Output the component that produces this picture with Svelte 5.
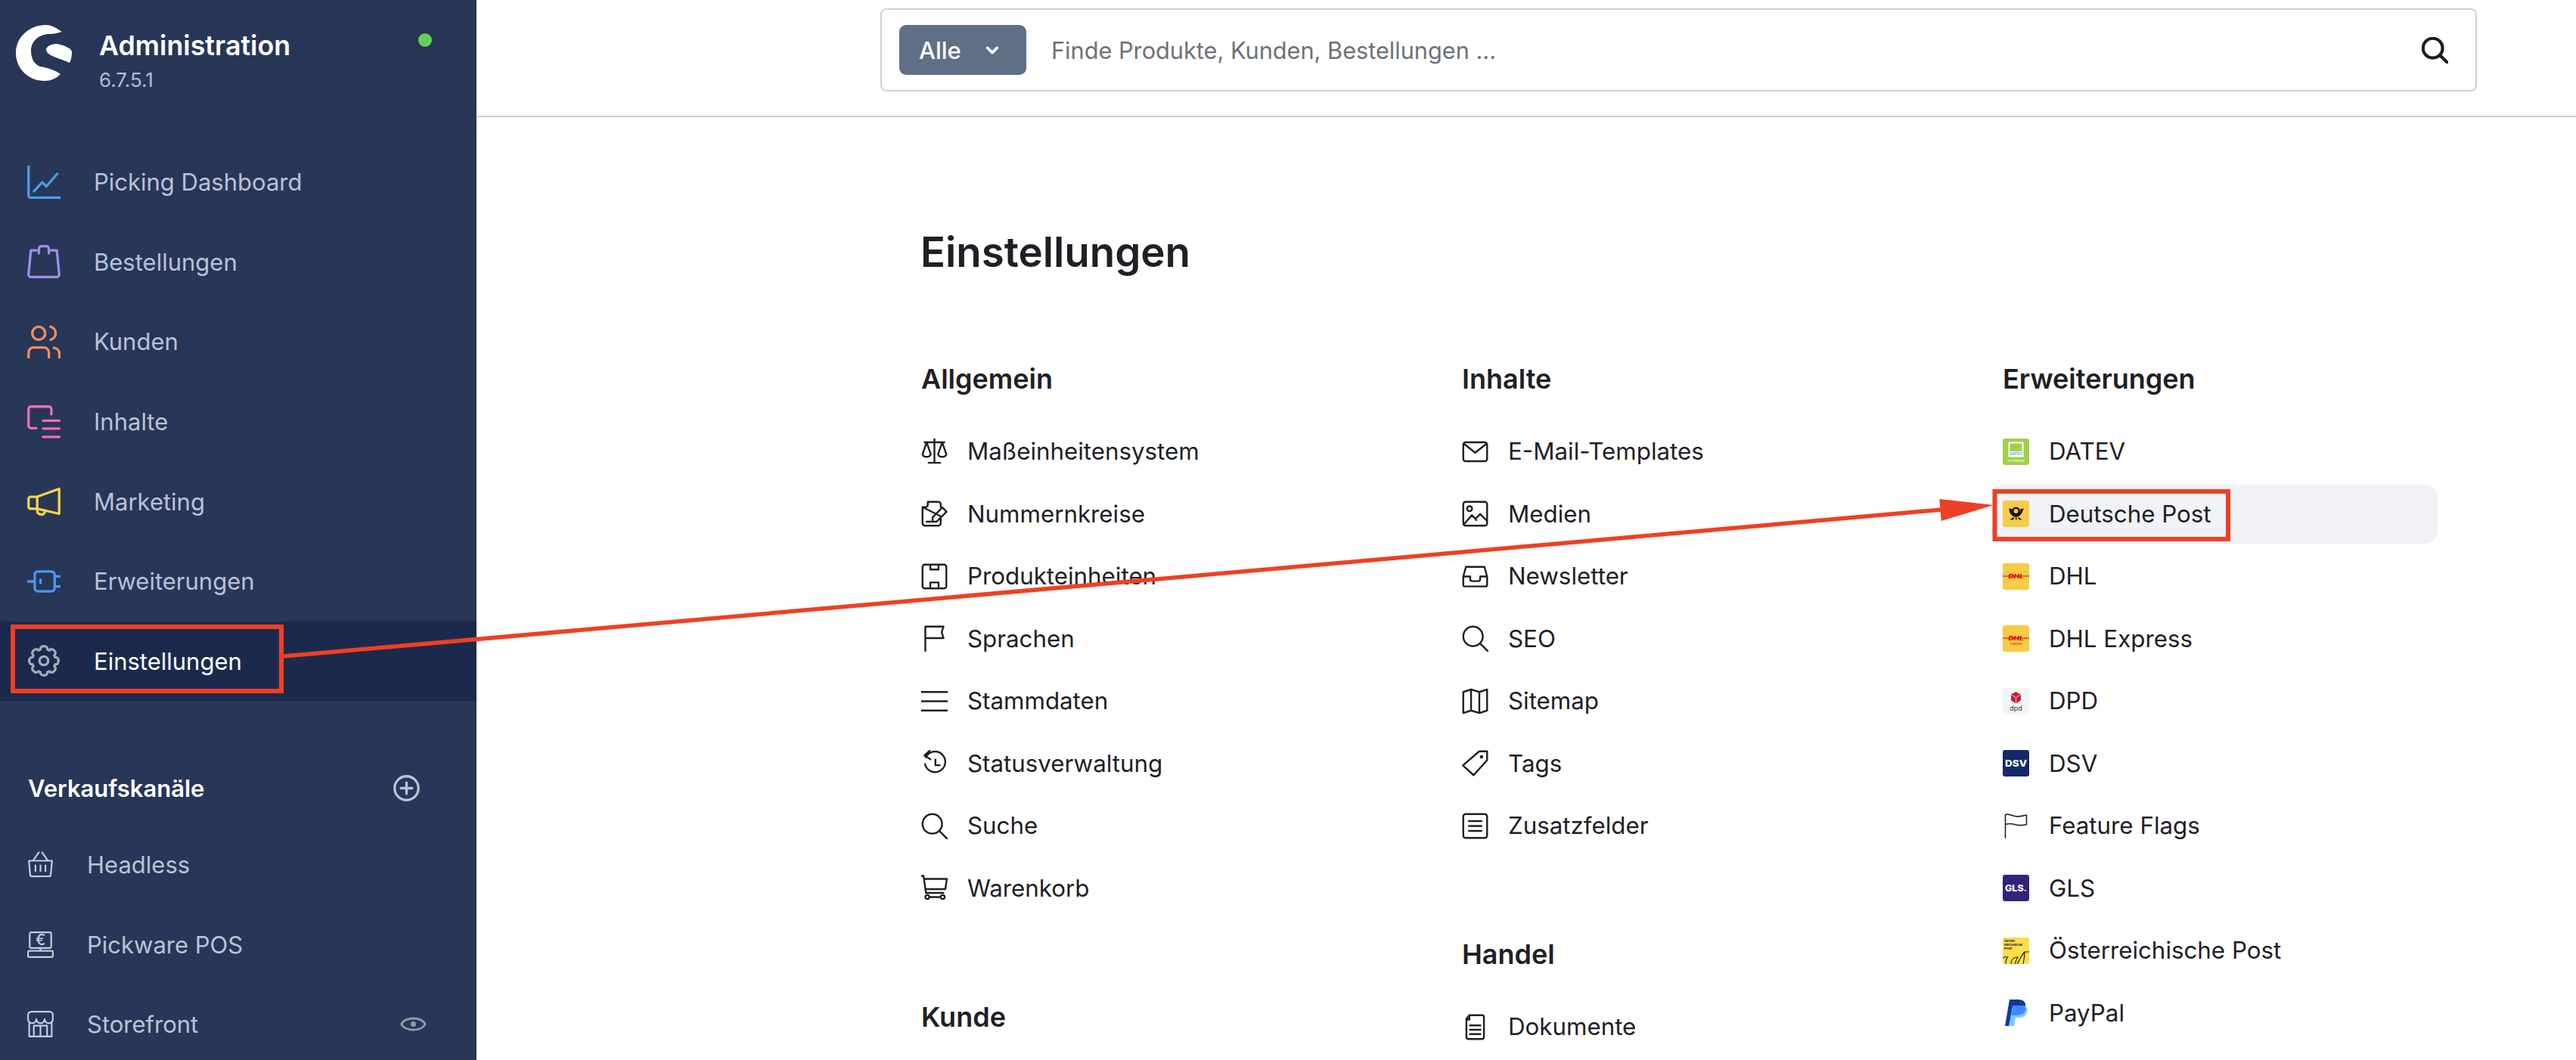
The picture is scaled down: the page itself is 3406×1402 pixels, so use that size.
<script>
  const gear = (() => {
    let d = '';
    for (let i = 0; i < 8; i++) {
      const a = (i * Math.PI) / 4 - Math.PI / 2;
      const p = (r, o) => `${(10 + r * Math.cos(a + o)).toFixed(2)} ${(10 + r * Math.sin(a + o)).toFixed(2)}`;
      d += `${i ? 'L' : 'M'}${p(7.1, -0.3)}C${p(9.8, -0.26)} ${p(9.8, 0.26)} ${p(7.1, 0.3)}`;
    }
    return d + 'Z';
  })();

  const nav = [
    { label: 'Picking Dashboard', color: '#4a9fe6', d: 'M.8 0V18a1.3 1.3 0 0 0 1.3 1.3H20M4 15.5L9 10L11.5 12.5L18 5' },
    { label: 'Bestellungen', color: '#9e8fe8', d: 'M5.5 3.2H2.2L.8 17.5a1.5 1.5 0 0 0 1.5 1.8H17.7a1.5 1.5 0 0 0 1.5-1.8L17.8 3.2H14.5M7 5V2.3a1.6 1.6 0 0 1 1.6-1.6h2.8A1.6 1.6 0 0 1 13 2.3V5' },
    { label: 'Kunden', color: '#ee8e5f', d: 'M6.9 1A3.9 3.9 0 1 0 6.9 8.8A3.9 3.9 0 1 0 6.9 1ZM14 1A4 4 0 0 1 14 8.8M.8 19.5V16.5A3 3 0 0 1 3.8 13.5H10A3 3 0 0 1 13 16.5V19.5M16 13.7A3.4 3.4 0 0 1 19.3 17V19.5' },
    { label: 'Inhalte', color: '#ec6fb0', d: 'M5.5 13.8H2.3A1.5 1.5 0 0 1 .8 12.3V2.3A1.5 1.5 0 0 1 2.3.8H13A1.5 1.5 0 0 1 14.5 2.3V5.5M9.5 9.3H19.3M9.5 14H19.3M9.5 19H19.3' },
    { label: 'Marketing', color: '#f6d545', d: 'M19.2 2.5L6 7.3V14.5L19.2 17.5ZM6 7.3H2.1A1.3 1.3 0 0 0 .8 8.6V13.2A1.3 1.3 0 0 0 2.1 14.5H6M6 14.8V15.5a2.4 2.4 0 0 0 4.6 1' },
    { label: 'Erweiterungen', color: '#4a97f5', d: 'M6.5 4H14.5A2 2 0 0 1 16.5 6V14A2 2 0 0 1 14.5 16H6.5A2 2 0 0 1 4.5 14V6A2 2 0 0 1 6.5 4ZM.3 10H4.5M16.5 7H20M16.5 13H20M8 9V11' },
    { label: 'Einstellungen', color: '#a3abb8', d: gear + 'M10 7.4A2.6 2.6 0 1 0 10 12.6A2.6 2.6 0 1 0 10 7.4Z', active: true }
  ];

  const channels = [
    { label: 'Headless', d: 'M1 5.7H15L14.2 14.2a1 1 0 0 1-1 .9H2.8a1 1 0 0 1-1-.9ZM3.5 5.7L7 .6M12.5 5.7L9 .6M5 8.5V12M8 8.5V12M11 8.5V12' },
    { label: 'Pickware POS', euro: true, d: 'M2.5.5H13.5a1 1 0 0 1 1 1V9a1 1 0 0 1-1 1H2.5a1 1 0 0 1-1-1V1.5a1 1 0 0 1 1-1ZM8 10V11.7M1.2 11.7H14.8a.7.7 0 0 1 .7.7V14.8a.7.7 0 0 1-.7.7H1.2a.7.7 0 0 1-.7-.7V12.4a.7.7 0 0 1 .7-.7Z' },
    { label: 'Storefront', eye: true, d: 'M.5 5V2.5a2 2 0 0 1 2-2H13.5a2 2 0 0 1 2 2V5a2.5 2.5 0 0 1-5 0a2.5 2.5 0 0 1-5 0a2.5 2.5 0 0 1-5 0ZM1.2 7V15.5H14.8V7M4 15.5V9H12V15.5M8 9V15.5' }
  ];

  const box = 'M2.2.8H13.8A1.4 1.4 0 0 1 15.2 2.2V13.8A1.4 1.4 0 0 1 13.8 15.2H2.2A1.4 1.4 0 0 1 .8 13.8V2.2A1.4 1.4 0 0 1 2.2.8Z';
  const search = 'M6.7.8A5.9 5.9 0 1 0 6.7 12.6A5.9 5.9 0 1 0 6.7.8ZM11 11L15.6 15.6';

  const col1 = [
    { title: 'Allgemein', items: [
      ['Maßeinheitensystem', 'M8 0V14.5M4.5 14.7H11.5M2 2.3H14M3.3 2.3L.8 9.5a2.6 2.2 0 0 0 5 0ZM12.7 2.3L10.2 9.5a2.6 2.2 0 0 0 5 0Z'],
      ['Nummernkreise', 'M4 .8H10.3a1.5 1.5 0 0 1 1.5 1.5V4M11.8 9.5V13.7a1.5 1.5 0 0 1-1.5 1.5H2.3a1.5 1.5 0 0 1-1.5-1.5V4ZM.8 4H2.5A1.5 1.5 0 0 0 4 2.5V.8M12.8 4.2L15.3 6.8L9.3 12.8H6.9V10.2ZM3.3 12.8H6'],
      ['Produkteinheiten', box + 'M5.5.8V3.8H10.5V.8M5.5 15.2V11.6H10.5V15.2'],
      ['Sprachen', 'M2.5 15.6V.8H13.5L12.4 4.2L13.5 7.8H2.5'],
      ['Stammdaten', 'M0 2.4H16M0 8H16M0 13.6H16'],
      ['Statusverwaltung', 'M2.8 4.4A6.2 6.2 0 1 1 2.3 8.5M5.2.3L2 3.3L5.6 5.6M8.6 5.7V9.2H11.2'],
      ['Suche', search],
      ['Warenkorb', 'M0 .7H1.4L2.9 11H13.4M1.8 2.5H15.5L14.6 8.7H2.6M3.7 12.3A1.2 1.2 0 1 0 3.7 14.7A1.2 1.2 0 1 0 3.7 12.3ZM13 12.3A1.2 1.2 0 1 0 13 14.7A1.2 1.2 0 1 0 13 12.3ZM5 13.5H11.7']
    ] },
    { title: 'Kunde', items: [] }
  ];

  const col2 = [
    { title: 'Inhalte', items: [
      ['E-Mail-Templates', 'M2.2 2.3H13.8A1.4 1.4 0 0 1 15.2 3.7V12.3A1.4 1.4 0 0 1 13.8 13.7H2.2A1.4 1.4 0 0 1 .8 12.3V3.7A1.4 1.4 0 0 1 2.2 2.3ZM1.2 3.2L8 8.6L14.8 3.2'],
      ['Medien', box + 'M4.6 3.4A1.5 1.5 0 1 0 4.6 6.4A1.5 1.5 0 1 0 4.6 3.4ZM1.2 14.4L6 8.8L8.8 11.8M8.2 11L11 8.2L15 12.2'],
      ['Newsletter', 'M2.4 2.2H13.6L15.2 8V13a1 1 0 0 1-1 1H1.8a1 1 0 0 1-1-1V8ZM.8 8H5V9.6a1.2 1.2 0 0 0 1.2 1.2H9.8A1.2 1.2 0 0 0 11 9.6V8H15.2'],
      ['SEO', search],
      ['Sitemap', 'M.8 2.4L5.5 .9L10.5 2.4L15.2 .9V13.6L10.5 15.1L5.5 13.6L.8 15.1ZM5.5 .9V13.6M10.5 2.4V15.1'],
      ['Tags', 'M15.2.8H10.4L.6 9.3L7 15.2L15.2 6.2ZM11.8 3.6A.5.5 0 1 0 11.8 4.6A.5.5 0 1 0 11.8 3.6Z'],
      ['Zusatzfelder', box + 'M4.2 5H11.8M4.2 8H11.8M4.2 11H11.8']
    ] },
    { title: 'Handel', items: [
      ['Dokumente', 'M4.5.8H12.2a1.1 1.1 0 0 1 1.1 1.1V14.1a1.1 1.1 0 0 1-1.1 1.1H3.8a1.1 1.1 0 0 1-1.1-1.1V3ZM2.7 3.4H4.5V.8M4.8 7H11.2M4.8 9.6H11.2M4.8 12.2H11.2']
    ] }
  ];

  const col3 = ['DATEV', 'Deutsche Post', 'DHL', 'DHL Express', 'DPD', 'DSV', 'Feature Flags', 'GLS', 'Österreichische Post', 'PayPal'];
</script>

<div class="root">
  <aside class="sidebar">
    <div class="brand">
      <svg class="logo" viewBox="0 0 74 74" width="74" height="74" fill="#fff">
        <path d="M61 9C52 3 46 0 40 0C18 0 0 16 0 37C0 58 17 74 38 74C46 74 53 71 59 65C52 60 44 57 32 55C24 52 20 44 20 34C20 22 30 12 45 12C51 12 56 10 61 9Z" />
        <path d="M40 32C42 27 48 25 54 25C64 27 72 30 74 35C74 42 73 46 71 50C62 46 52 43 46 40C42 38 40 35 40 32Z" />
      </svg>
      <div class="brand-text">
        <div class="brand-name">Administration</div>
        <div class="brand-version">6.7.5.1</div>
      </div>
      <span class="status-dot"></span>
    </div>

    <nav class="nav">
      {#each nav as item}
        <div class="nav-item" class:active={item.active}>
          <svg class="nav-icon" viewBox="0 0 20 20" width="44" height="44" fill="none" stroke={item.color} stroke-width="1.5" stroke-linecap="round" stroke-linejoin="round">
            <path d={item.d} />
          </svg>
          <span>{item.label}</span>
        </div>
      {/each}
    </nav>

    <div class="channels-head">
      <span>Verkaufskanäle</span>
      <svg viewBox="0 0 16 16" width="35" height="35" fill="none" stroke="#b9c4d6" stroke-width="1.5" stroke-linecap="round">
        <circle cx="8" cy="8" r="7.2" />
        <path d="M8 4.6V11.4M4.6 8H11.4" />
      </svg>
    </div>

    <div class="channels">
      {#each channels as ch}
        <div class="channel">
          <svg viewBox="0 0 16 16" width="35" height="35" fill="none" stroke="#c3cddd" stroke-width="1" stroke-linecap="round" stroke-linejoin="round">
            <path d={ch.d} />
            {#if ch.euro}
              <text class="euro" x="8" y="8.2" text-anchor="middle">€</text>
            {/if}
          </svg>
          <span class="channel-label">{ch.label}</span>
          {#if ch.eye}
            <svg class="eye" viewBox="0 0 16 16" width="35" height="35" fill="none" stroke="#8f9bad" stroke-width="1.3">
              <path d="M.8 8C3 3.4 13 3.4 15.2 8C13 12.6 3 12.6 .8 8Z" />
              <circle cx="8" cy="8" r="1.6" fill="#8f9bad" stroke="none" />
            </svg>
          {/if}
        </div>
      {/each}
    </div>
  </aside>

  <div class="main">
    <header class="topbar">
      <div class="searchbar">
        <div class="scope">
          <span>Alle</span>
          <svg viewBox="0 0 12 12" width="22" height="22" fill="none" stroke="#fff" stroke-width="2" stroke-linecap="round" stroke-linejoin="round">
            <path d="M2.5 4.5L6 8L9.5 4.5" />
          </svg>
        </div>
        <span class="placeholder">Finde Produkte, Kunden, Bestellungen ...</span>
        <svg class="search-icon" viewBox="0 0 16 16" width="35" height="35" fill="none" stroke="#1b1c20" stroke-width="1.9" stroke-linecap="round">
          <path d={search} />
        </svg>
      </div>
    </header>

    <main class="content">
      <h1>Einstellungen</h1>
      <div class="columns">
        {#each [col1, col2] as col}
          <div class="column">
            {#each col as group}
              <section>
                <h2>{group.title}</h2>
                <ul>
                  {#each group.items as [label, d]}
                    <li>
                      <svg viewBox="0 0 16 16" width="35" height="35" fill="none" stroke="#1f2025" stroke-width="1.1" stroke-linecap="round" stroke-linejoin="round">
                        <path {d} />
                      </svg>
                      <span>{label}</span>
                    </li>
                  {/each}
                </ul>
              </section>
            {/each}
          </div>
        {/each}

        <div class="column">
          <section>
            <h2>Erweiterungen</h2>
            <ul>
              {#each col3 as label}
                <li class:hovered={label === 'Deutsche Post'}>
                  <svg class="brand-mark" viewBox="0 0 35 35" width="35" height="35">
                    {#if label === 'DATEV'}
                      <rect width="35" height="35" rx="3" fill="#9fd04c" />
                      <rect x="8.5" y="5.5" width="18" height="18" fill="none" stroke="#fff" stroke-width="2" />
                      <rect x="9" y="17" width="17" height="6" fill="#fff" />
                      <text class="tiny teal" x="17.5" y="22.2" text-anchor="middle">DATEV</text>
                      <text class="micro white" x="17.5" y="30.5" text-anchor="middle">Schnittstelle</text>
                    {:else if label === 'Deutsche Post'}
                      <rect width="35" height="35" rx="3" fill="#f7cb45" />
                      <path d="M10 11.5C10.5 17 14 20.5 17.5 20.5C21 20.5 24.5 17 25.5 11.5" fill="none" stroke="#111" stroke-width="3" />
                      <circle cx="17.5" cy="14" r="4.2" fill="none" stroke="#111" stroke-width="2.4" />
                      <path d="M8 10.5L13 11.5L10.5 15.5ZM28 10.5L23 11.5L25 15.5Z" fill="#111" />
                      <path d="M9.5 25.5L13.5 22.5H16L13.5 25.5ZM17 25.5V22.5H18.5V25.5ZM25.5 25.5L21.5 22.5H19.5L22 25.5Z" fill="#111" />
                    {:else if label === 'DHL' || label === 'DHL Express'}
                      <rect width="35" height="35" rx="3" fill="#f7cb45" />
                      <path d="M0 17H35" stroke="#d40511" stroke-width="1" />
                      <text class="dhl" x="7.5" y="20" textLength="20" lengthAdjust="spacingAndGlyphs">DHL</text>
                      {#if label === 'DHL Express'}
                        <text class="micro red" x="17.5" y="25.5" text-anchor="middle">Express</text>
                      {/if}
                    {:else if label === 'DPD'}
                      <rect width="35" height="35" rx="3" fill="#f4f4f6" />
                      <path d="M17.5 5L24 8.5V16.5L17.5 20.5L11 16.5V8.5Z" fill="#c8203c" />
                      <path d="M11.5 9L17.5 12.5L23.5 9M17.5 12.5V20" fill="none" stroke="#f4f4f6" stroke-width=".8" />
                      <text class="dpd" x="17.5" y="30" text-anchor="middle">dpd</text>
                    {:else if label === 'DSV'}
                      <rect width="35" height="35" rx="3" fill="#13296a" />
                      <text class="logo-word white" x="3" y="21.5" textLength="29" lengthAdjust="spacingAndGlyphs">DSV</text>
                    {:else if label === 'Feature Flags'}
                      <path d="M3.5 33V2.5C8 1 11 3.5 16 4.5S26 4.5 31.5 3V15.5C26 17 21 17 16 15.5S8 14 3.5 15.5" fill="none" stroke="#1f2025" stroke-width="1.6" stroke-linecap="round" stroke-linejoin="round" />
                    {:else if label === 'GLS'}
                      <rect width="35" height="35" rx="3" fill="#34227a" />
                      <text class="logo-word white" x="3" y="22" textLength="29" lengthAdjust="spacingAndGlyphs">GLS<tspan fill="#f7cb45">.</tspan></text>
                    {:else if label === 'Österreichische Post'}
                      <rect width="35" height="35" rx="3" fill="#fadf4b" />
                      <text class="nano" x="2" y="6">ÖSTER-</text>
                      <text class="nano" x="2" y="11">REICHISCHE</text>
                      <text class="nano" x="2" y="16">POST</text>
                      <path d="M0 27L5 25M4 35C4 30 5 27 7 25M11 35C11 29 15 26 20 26C18 29 17 32 16 35M19 35C22 30 26 22 29 19H35M29 19C29 24 28 30 27 35" fill="none" stroke="#1a1a1a" stroke-width="1.1" />
                    {:else if label === 'PayPal'}
                      <path d="M9 0H20C28 0 31 4 30 10C29 17 23 21 17 21H13L10.5 35H3Z" fill="#0b3a9b" />
                      <path d="M13 8H25C31 8 33 11 32.5 15C31.5 21 27 24 21 24H17L15 35H8Z" fill="#7cc6ff" />
                      <path d="M13 8H27C30 9 31 11 30 14C28.5 19 24 21 17 21H13L11.5 21Z" fill="#3f8af5" />
                    {/if}
                  </svg>
                  <span>{label}</span>
                </li>
              {/each}
            </ul>
          </section>
        </div>
      </div>
    </main>
  </div>

  <!-- annotation layer -->
  <svg class="annotation" viewBox="0 0 3406 1402" width="3406" height="1402" fill="none" stroke="#ee4024">
    <rect x="17" y="829" width="355" height="85" stroke-width="6" />
    <rect x="2637.5" y="650" width="308.5" height="63" stroke-width="6" />
    <path d="M372 868.3L2580 673" stroke-width="5.5" />
    <path d="M2636 668L2564.3 660L2566.8 689Z" fill="#ee4024" stroke="none" />
  </svg>
</div>

<style>
  :global(body) {
    margin: 0;
    background: #fff;
  }

  .root {
    position: relative;
    display: flex;
    width: 3406px;
    height: 1402px;
    overflow: hidden;
    font-family: Inter, "Liberation Sans", sans-serif;
    color: #1f2025;
  }

  .sidebar {
    flex: 0 0 630px;
    background: #283657;
    color: #b8c3d6;
    font-size: 31px;
  }

  .brand {
    position: relative;
    display: flex;
    height: 188px;
    box-sizing: border-box;
    padding: 33px 0 0 21px;
    gap: 36px;
  }
  .logo { flex: none; }
  .brand-text { padding-top: 5px; }
  .brand-name {
    font-size: 35.8px;
    line-height: 44px;
    font-weight: 600;
    color: #fff;
  }
  .brand-version {
    font-size: 26px;
    line-height: 30px;
    margin-top: 9px;
    color: #b3bdcd;
  }
  .status-dot {
    position: absolute;
    left: 553px;
    top: 44px;
    width: 18px;
    height: 18px;
    border-radius: 50%;
    background: #66cf5a;
  }

  .nav-item {
    display: flex;
    align-items: center;
    height: 105.6px;
    padding-left: 36px;
    gap: 44px;
  }
  .nav-item.active {
    background: #1b2a4c;
    color: #fff;
  }
  .nav-icon { flex: none; }

  .channels-head {
    display: flex;
    align-items: center;
    justify-content: space-between;
    margin-top: 85px;
    padding: 0 75px 0 37px;
    height: 60px;
    font-weight: 600;
    color: #fff;
  }

  .channels { margin-top: 19px; }

  .channel {
    display: flex;
    align-items: center;
    height: 105.5px;
    padding: 0 66px 0 36px;
    gap: 44px;
  }
  .channel-label { flex: 1; }
  .channel svg { flex: none; }
  .euro {
    font-size: 9px;
    font-weight: 500;
    fill: #c3cddd;
    stroke: none;
  }

  .main {
    flex: 1;
    min-width: 0;
  }

  .topbar {
    height: 155px;
    box-sizing: border-box;
    padding: 11px 0 0 534px;
    border-bottom: 2px solid #d1d2d8;
  }

  .searchbar {
    display: flex;
    align-items: center;
    width: 2111px;
    height: 110px;
    box-sizing: border-box;
    padding: 0 36px 0 23px;
    border: 2px solid #d1d2d8;
    border-radius: 8px;
  }
  .scope {
    display: flex;
    align-items: center;
    justify-content: space-between;
    width: 168px;
    height: 66px;
    box-sizing: border-box;
    padding: 0 34px 0 26px;
    border-radius: 9px;
    background: #5f6f86;
    color: #fff;
    font-size: 31px;
    font-weight: 500;
  }
  .placeholder {
    flex: 1;
    margin-left: 33px;
    font-size: 30.7px;
    color: #6f7178;
  }
  .search-icon { flex: none; }

  .content {
    padding: 147px 0 0 574px;
  }

  h1 {
    margin: 0 0 117px 13px;
    font-size: 54.6px;
    line-height: 62px;
    font-weight: 600;
  }

  .columns {
    display: grid;
    grid-template-columns: repeat(3, 589px);
    column-gap: 126px;
  }

  section + section { margin-top: 111px; }

  h2 {
    margin: 0 0 37px 14px;
    font-size: 36px;
    line-height: 40px;
    font-weight: 600;
  }

  ul {
    display: flex;
    flex-direction: column;
    gap: 4.5px;
    margin: 0;
    padding: 0;
    list-style: none;
  }

  li {
    display: flex;
    align-items: center;
    gap: 26px;
    height: 78px;
    padding-left: 14px;
    border-radius: 16px;
    font-size: 31.3px;
  }
  li svg { flex: none; }
  li.hovered { background: #f0f2f8; }

  .tiny { font-size: 5px; font-weight: 500; }
  .micro { font-size: 4px; }
  .nano { font-size: 4px; font-weight: 700; fill: #1a1a1a; }
  .teal { fill: #2a9ab0; }
  .white { fill: #fff; }
  .red { fill: #d40511; }
  .dhl {
    font-size: 8px;
    font-weight: 800;
    font-style: italic;
    fill: #d40511;
  }
  .dpd { font-size: 9px; fill: #3c3c3c; }
  .logo-word { font-size: 12px; font-weight: 800; }

  .annotation {
    position: absolute;
    left: 0;
    top: 0;
    pointer-events: none;
  }
</style>
